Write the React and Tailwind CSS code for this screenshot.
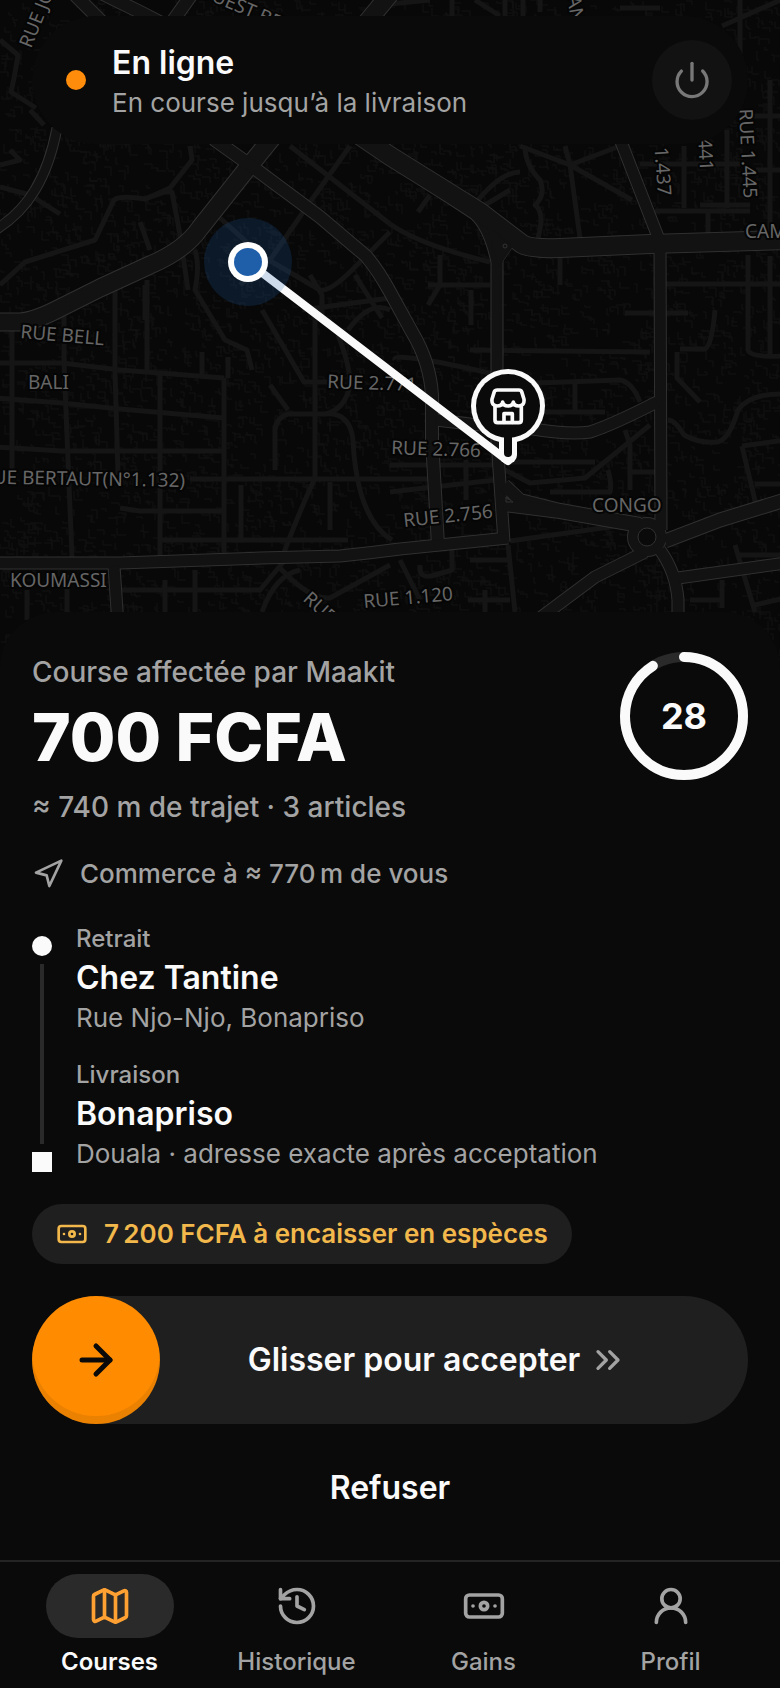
import { useState } from "react";
import {
  ArrowRight,
  Banknote,
  ChevronsRight,
  History,
  Map as MapIcon,
  Navigation,
  Power,
  UserRound,
} from "lucide-react";

// Main roads of the district: [path, width]
const MAIN_ROADS = [
  ["M-5 322H20Q35 321 60 308L100 288L150 265Q185 250 200 228L250 165L285 122L390 -6", 17],
  ["M60 -20L150 70L215 140L250 165L320 217L366 256Q378 270 390 292L412 332Q430 362 432 395L432 440L438 545", 12],
  ["M355 132L390 158L475 214Q490 228 497 262L497 440L504 542", 11],
  ["M340 122L390 156L480 212L522 244Q530 249 560 248L650 244L785 240", 18],
  ["M618 134L660 242L661 530", 11],
  ["M436 420L470 424L533 429Q570 435 590 432Q612 425 657 402", 11],
  ["M504 485L520 500L560 510L640 524", 12],
  ["M504 505L560 512L640 526", 12],
  ["M-5 563H120L260 558L340 556Q370 553 400 549L508 538", 11],
  ["M114 566L118 625", 11],
  ["M645 552L595 577L540 618", 11],
  ["M660 550Q676 572 678 600V670", 11],
  ["M665 541L720 520L785 500", 13],
  ["M678 578L785 563", 11],
  ["M57 128Q50 165 35 190Q20 215 -5 230", 9],
  ["M95 -10L140 12L175 30", 12],
  ["M170 25L192 -6", 12],
];

const SIDE_ROADS = [
  "M-5 363L62 363L120 370L224 378", "M-5 398L62 403L120 409L224 418", "M-5 447L62 451H222",
  "M120 508L140 511H222", "M160 540H348", "M190 479H435", "M12 330V470", "M64 300V363L72 557",
  "M115 275V372L118 475", "M147 280V370", "M160 375V556", "M224 378V556", "M241 485V538",
  "M202 352V378M228 357V378", "M315 308V478Q300 510 283 555", "M330 482V530",
  "M262 310L304 382H330", "M348 330Q370 300 390 310", "M338 335Q350 365 350 385Q345 410 325 414H288Q276 418 275 430V470",
  "M325 414Q350 412 353 440Q355 480 365 505T392 540", "M120 590H260L285 560", "M195 570V612M165 580V612",
  "M27 590V620M67 575V615", "M280 568Q310 600 330 598L390 565", "M262 612Q275 575 300 570",
  "M0 285L25 262L95 240L114 200Q120 195 145 199L170 188L192 160L190 146", "M145 199L165 192L172 192L180 235L188 290",
  "M140 222L150 250M145 285V320", "M195 250Q200 265 195 290L225 340L247 350L252 370M270 385L288 410",
  "M0 165L20 160L10 150M0 187L30 195L60 214", "M0 40L18 55Q14 80 11 92L36 108", "M120 30L160 60M30 110L44 125",
  "M290 146L390 224", "M350 146L308 205L270 260L240 285", "M220 218L262 256L320 290Q330 292 352 270L390 232",
  "M310 275L322 295V320M355 275L382 318M302 310L390 298", "M520 146L570 165L632 200M620 146L570 165L580 238",
  "M565 146L570 165M525 146Q525 165 540 180Q546 195 535 205Q545 212 538 238", "M474 205Q500 172 520 172M480 208L510 190",
  "M418 212L430 195M390 224Q420 245 490 262M440 255V285L428 305M428 285H490M471 290V325",
  "M560 258V285M625 313H688M700 205H750M640 164H740M655 211H750M684 146V208M727 130V208M708 210V236",
  "M770 80V235M740 0V70M722 26L785 -2M752 116H785M780 170H756M665 284H785M748 255V350Q750 358 785 356M770 256V355",
  "M470 350L650 352M680 349H705Q712 345 715 310M677 352V378L700 402", "M395 360Q390 350 498 375M510 384L620 380Q632 382 640 402",
  "M575 384V412M505 412H605M650 425L585 478L530 483L505 470M625 430L630 445V490M510 462H595M550 492H610Q612 485 608 470",
  "M668 420Q675 420 684 435Q700 444 718 442Q730 438 738 410Q750 393 785 394", "M742 446L785 440M742 446L756 505M755 484H785M660 472H630",
  "M390 465L495 465M390 492L495 480M466 460V500M510 541L645 522M508 545L515 612M470 560L508 560M420 565Q418 580 435 575L452 570V550",
  "M468 600H510M485 590V612M690 600H720M722 580V608M735 545L755 612M740 555H785M755 605L785 598M400 560L420 600",
  "M452 0V16M505 0V16M523 0V16M475 0L500 16M540 0V12M620 8H660M390 4L430 0",
];

// Small building footprints scattered between the streets
function buildFootprints() {
  let seed = 29;
  const next = () => {
    seed = (seed * 16807) % 2147483647;
    return seed / 2147483647;
  };
  let d = "";
  for (let i = 0; i < 5200; i += 1) {
    const x = Math.round(next() * 780);
    const y = Math.round(next() * 668);
    const w = 2 + Math.round(next() * 7);
    const h = 2 + Math.round(next() * 7);
    d += next() > 0.5 ? `M${x} ${y}h${w}v${h}` : `M${x} ${y}v${h}h${w}`;
  }
  return d;
}
const FOOTPRINTS = buildFootprints();

// [text, x, y, rotation, anchor]
const LABELS = [
  ["RUE JOSS", 31, 49, -68, "start"],
  ["OUEST BELL", 197, -5, 23, "start"],
  ["AN", 567, -3, 80, "start"],
  ["RUE 1.437", 658, 196, 86, "end"],
  ["RUE 1.441", 700, 171, 87, "end"],
  ["RUE 1.445", 739, 109, 87, "start"],
  ["CAMEROUN", 745, 238, 0, "start"],
  ["RUE BELL", 20, 338, 5, "start"],
  ["BALI", 28, 389, 0, "start"],
  ["RUE BERTAUT(N°1.132)", 185, 487, 1, "end"],
  ["KOUMASSI", 10, 587, 0, "start"],
  ["RUE 2.771", 327, 388, 2, "start"],
  ["RUE 2.766", 391, 454, 2, "start"],
  ["RUE 2.756", 404, 527, -6, "start"],
  ["CONGO", 592, 512, 0, "start"],
  ["RUE 1.120", 364, 608, -5, "start"],
  ["RUE", 302, 600, 42, "start"],
];

function StoreGlyph() {
  return (
    <g transform="translate(390 310) scale(0.3333)" fill="none" stroke="#fafafa" strokeWidth="11" strokeLinejoin="round" strokeLinecap="round">
      <path d="M322 240H387Q393 240 395 245L402 268Q404 287 387 288Q371 288 370 276Q368 288 354 288Q340 288 338 276Q337 288 321 288Q304 287 306 268L313 245Q315 240 322 240Z" />
      <path d="M315 290V330Q315 338 323 338H386Q394 338 394 330V290" />
      <path d="M342 337V311H367V337" />
    </g>
  );
}

function CityMap() {
  return (
    <svg
      className="block h-full w-full"
      viewBox="0 0 780 668"
      preserveAspectRatio="xMidYMid slice"
      role="img"
      aria-label="Carte du trajet"
    >
      <rect width="780" height="668" fill="#080808" />
      <path d={FOOTPRINTS} fill="none" stroke="#121212" strokeWidth="1" />
      <g fill="none" stroke="#151515" strokeWidth="5" strokeLinejoin="round">
        {SIDE_ROADS.map((d) => <path key={d} d={d} />)}
      </g>
      <g fill="none" stroke="#303030" strokeLinejoin="round">
        {MAIN_ROADS.map(([d, w]) => <path key={d} d={d} strokeWidth={w + 2} />)}
        <circle cx="647" cy="537" r="14" strokeWidth="12" />
        <path d="M488 226L512 246L497 268Z" strokeWidth="3" />
      </g>
      <g fill="none" stroke="#121212" strokeLinejoin="round">
        {MAIN_ROADS.map(([d, w]) => <path key={d} d={d} strokeWidth={w} />)}
        <circle cx="647" cy="537" r="14" strokeWidth="10" />
        <path d="M488 226L512 246L497 268Z" fill="#121212" strokeWidth="2" />
      </g>
      <circle cx="647" cy="537" r="9" fill="#0a0a0a" stroke="#303030" />
      <circle cx="505" cy="246" r="2" fill="none" stroke="#333333" />
      <path d="M506 497V502H513Z" fill="none" stroke="#303030" />
      <g
        fill="#666666"
        stroke="#050505"
        strokeWidth="4"
        paintOrder="stroke"
        strokeLinejoin="round"
        fontSize="19"
        fontFamily="'Noto Sans', sans-serif"
      >
        {LABELS.map(([text, x, y, angle, anchor]) => (
          <text key={text} textAnchor={anchor} transform={`translate(${x} ${y}) rotate(${angle})`}>
            {text}
          </text>
        ))}
      </g>

      <path d="M248 262L508 461" stroke="#fafafa" strokeWidth="8" strokeLinecap="round" />
      <circle cx="248" cy="262" r="44" fill="#1f5fae" fillOpacity="0.2" />
      <circle cx="248" cy="262" r="20" fill="#ffffff" />
      <circle cx="248" cy="262" r="14" fill="#1f5faa" />

      <rect x="499" y="430" width="18" height="34" rx="9" fill="#fafafa" />
      <circle cx="508" cy="406" r="37" fill="#fafafa" />
      <circle cx="508" cy="406" r="32" fill="#0a0a0a" />
      <rect x="504" y="428" width="8" height="29" rx="4" fill="#0a0a0a" />
      <StoreGlyph />
    </svg>
  );
}

function StatusBar() {
  return (
    <header className="absolute inset-x-8 top-4 flex h-32 items-center rounded-full bg-[#0a0a0a] pr-4 pl-[34px]">
      <span className="h-5 w-5 shrink-0 rounded-full bg-[#ff8c0a]" />
      <div className="ml-[26px] min-w-0 flex-1 pt-1.5">
        <h1 className="text-[32px] leading-10 font-semibold text-[#fafafa]">En ligne</h1>
        <p className="text-[26px] leading-10 text-[#a3a3a3]">En course jusqu’à la livraison</p>
      </div>
      <button
        type="button"
        aria-label="Passer hors ligne"
        className="flex h-20 w-20 shrink-0 items-center justify-center rounded-full bg-[#121212] text-[#787878]"
      >
        <Power size={40} />
      </button>
    </header>
  );
}

function Countdown({ seconds, progress }) {
  const radius = 59;
  const length = 2 * Math.PI * radius;
  return (
    <div className="grid h-32 w-32 shrink-0 place-items-center">
      <svg className="col-start-1 row-start-1 -rotate-90" width="128" height="128" viewBox="0 0 128 128" aria-hidden="true">
        <circle cx="64" cy="64" r={radius} fill="none" stroke="#2a2a2a" strokeWidth="10" />
        <circle
          cx="64"
          cy="64"
          r={radius}
          fill="none"
          stroke="#fafafa"
          strokeWidth="10"
          strokeLinecap="round"
          strokeDasharray={`${length * progress} ${length}`}
        />
      </svg>
      <span className="col-start-1 row-start-1 text-4xl font-bold text-[#fafafa]">{seconds}</span>
    </div>
  );
}

function Stop({ label, name, address }) {
  return (
    <div>
      <p className="text-2xl leading-[34px] font-medium text-[#a3a3a3]">{label}</p>
      <p className="text-[32px] leading-[44px] font-semibold text-[#fafafa]">{name}</p>
      <p className="text-[26px] leading-9 text-[#a3a3a3]">{address}</p>
    </div>
  );
}

function AcceptSlider() {
  const [value, setValue] = useState(0);
  return (
    <div className="relative mt-8 flex h-32 items-center rounded-full bg-[#1f1f1f] pr-8">
      <span
        className="z-10 flex h-32 w-32 shrink-0 items-center justify-center rounded-full bg-[#ff8c00] text-[#0a0a0a] shadow-[inset_0_-8px_0_rgba(0,0,0,0.08)]"
        style={{ marginLeft: `${value * 0.8}%`, marginRight: `${value * -0.8}%` }}
      >
        <ArrowRight size={48} strokeWidth={2.5} />
      </span>
      <label
        htmlFor="accept"
        className="flex flex-1 items-center justify-center gap-2 text-[32px] leading-10 font-semibold whitespace-nowrap text-[#fafafa]"
      >
        Glisser pour accepter
        <ChevronsRight size={40} className="text-[#a3a3a3]" />
      </label>
      <input
        id="accept"
        type="range"
        min="0"
        max="100"
        value={value}
        onChange={(event) => setValue(Number(event.target.value))}
        className="absolute inset-0 z-20 h-full w-full cursor-pointer opacity-0"
      />
    </div>
  );
}

const TABS = [
  { label: "Courses", icon: MapIcon, active: true },
  { label: "Historique", icon: History },
  { label: "Gains", icon: Banknote },
  { label: "Profil", icon: UserRound },
];

function TabBar() {
  return (
    <nav className="grid grid-cols-4 border-t-2 border-[#242424] bg-[#0a0a0a] px-4 pt-3 pb-2.5">
      {TABS.map(({ label, icon: Icon, active }) => (
        <a
          key={label}
          href="#"
          aria-current={active ? "page" : undefined}
          className="flex flex-col items-center gap-2"
        >
          <span
            className={
              active
                ? "flex h-16 w-32 items-center justify-center rounded-full bg-[#2a2a2a] text-[#ffa033]"
                : "flex h-16 w-32 items-center justify-center rounded-full text-[#a3a3a3]"
            }
          >
            <Icon size={44} />
          </span>
          <span
            className={
              active
                ? "text-2xl leading-8 font-semibold text-[#fafafa]"
                : "text-2xl leading-8 font-medium text-[#a3a3a3]"
            }
          >
            {label}
          </span>
        </a>
      ))}
    </nav>
  );
}

export default function App() {
  return (
    <div className="flex min-h-screen flex-col bg-[#0a0a0a] font-['Inter',sans-serif]">
      <section className="relative h-[668px]">
        <CityMap />
        <StatusBar />
      </section>

      <main className="relative -mt-14 flex-1 rounded-t-[56px] bg-[#0a0a0a] px-8 pt-10 pb-6">
        <div className="flex items-start justify-between">
          <div>
            <p className="text-[28px] leading-10 font-medium text-[#a3a3a3]">Course affectée par Maakit</p>
            <p className="text-[66px] leading-[90px] font-extrabold text-[#fafafa]">700 FCFA</p>
            <p className="mt-1.5 text-[28px] leading-[38px] font-medium text-[#a3a3a3]">≈ 740 m de trajet · 3 articles</p>
          </div>
          <Countdown seconds={28} progress={0.91} />
        </div>

        <p className="mt-[30px] flex items-center gap-4 text-[26px] leading-9 font-medium text-[#a3a3a3]">
          <Navigation size={32} />
          Commerce à ≈ 770&#8239;m de vous
        </p>

        <div className="mt-[30px] flex gap-6">
          <div className="flex flex-col items-center gap-2 pt-3.5">
            <span className="h-5 w-5 rounded-full bg-[#fafafa]" />
            <span className="w-1 flex-1 bg-[#2a2a2a]" />
            <span className="h-5 w-5 bg-[#fafafa]" />
          </div>
          <div className="flex flex-col gap-[22px]">
            <Stop label="Retrait" name="Chez Tantine" address="Rue Njo-Njo, Bonapriso" />
            <Stop label="Livraison" name="Bonapriso" address="Douala · adresse exacte après acceptation" />
          </div>
        </div>

        <p className="mt-8 flex h-[60px] w-fit items-center gap-4 rounded-full bg-[#1f1f1f] px-6 text-[26px] leading-9 font-semibold text-[#f2b84b]">
          <Banknote size={32} />
          7&#8239;200 FCFA à encaisser en espèces
        </p>

        <AcceptSlider />

        <button
          type="button"
          className="mt-4 h-24 w-full rounded-full text-[32px] leading-10 font-semibold text-[#fafafa]"
        >
          Refuser
        </button>
      </main>

      <TabBar />
    </div>
  );
}
